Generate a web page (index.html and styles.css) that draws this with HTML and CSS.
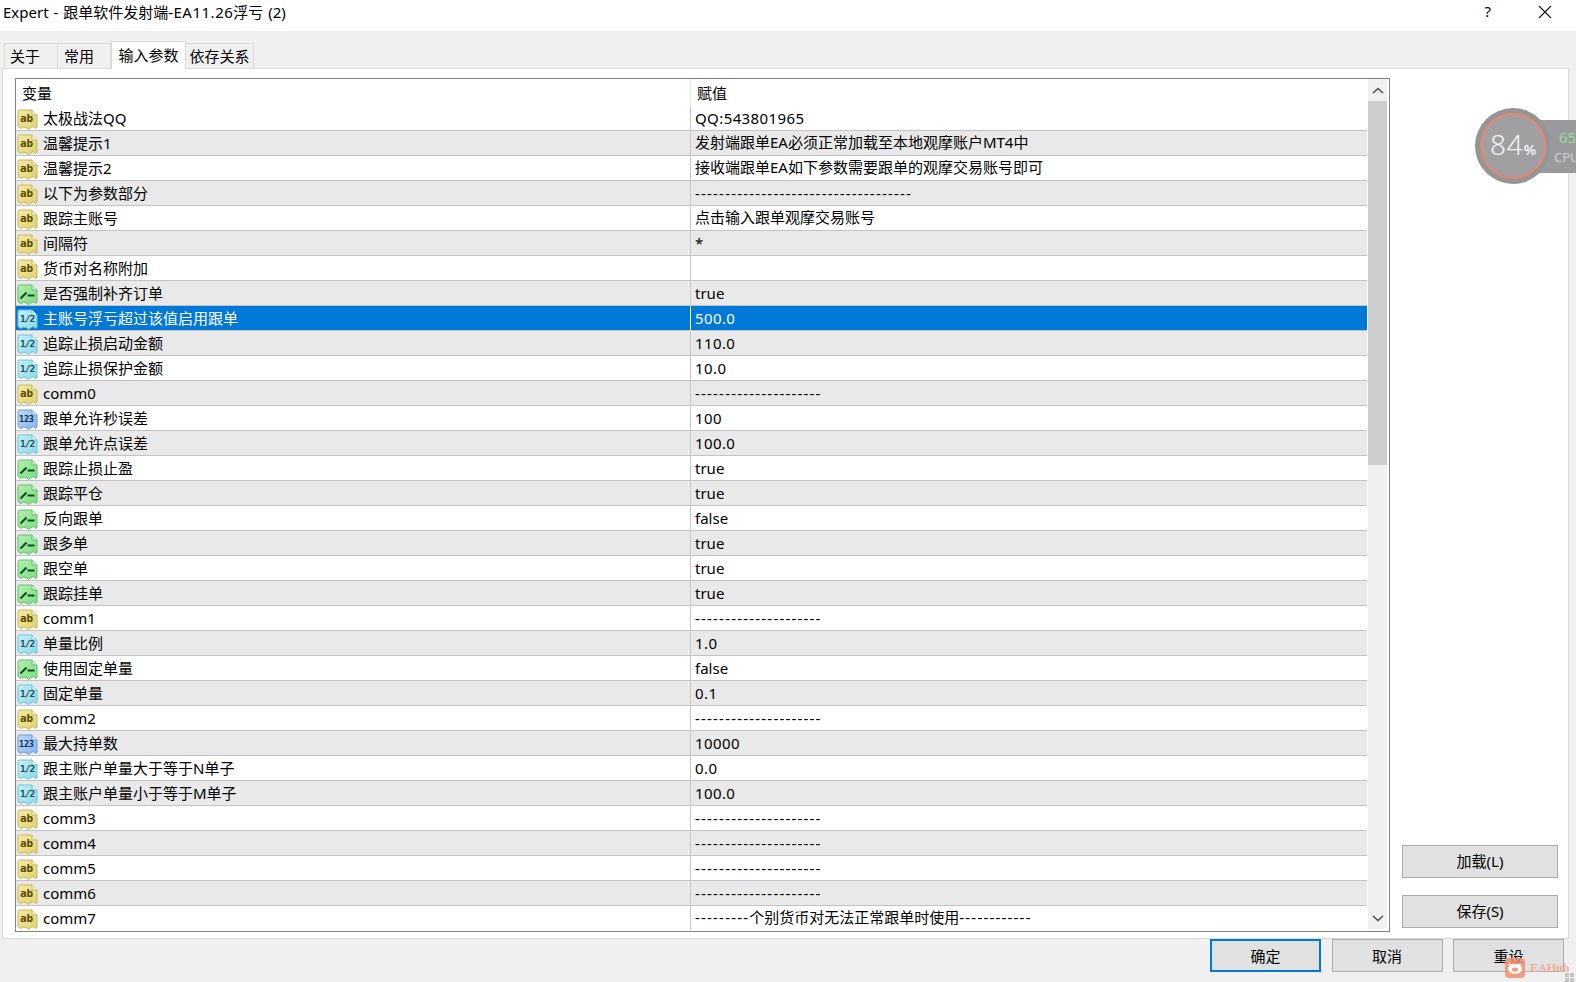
FILE: index.html
```html
<!DOCTYPE html>
<html>
<head>
  <meta charset="utf-8">
  <title>Expert</title>
  <link rel="stylesheet" href="styles.css">
</head>
<body>

<!-- icons of the parameter types -->
<svg class="sprite" xmlns="http://www.w3.org/2000/svg">
  <defs>
    <linearGradient id="gr-ab" x1="0" y1="0" x2="1" y2="1"><stop offset="0" stop-color="#f4eba8"/><stop offset="1" stop-color="#e0d06c"/></linearGradient>
    <linearGradient id="gr-bool" x1="0" y1="0" x2="1" y2="1"><stop offset="0" stop-color="#b4f0b0"/><stop offset="1" stop-color="#7cdc84"/></linearGradient>
    <linearGradient id="gr-dbl" x1="0" y1="0" x2="1" y2="1"><stop offset="0" stop-color="#c4f0f6"/><stop offset="1" stop-color="#8cd8e8"/></linearGradient>
    <linearGradient id="gr-int" x1="0" y1="0" x2="1" y2="1"><stop offset="0" stop-color="#c0dafa"/><stop offset="1" stop-color="#84b2ea"/></linearGradient>
  </defs>
  <symbol id="ic-ab" viewBox="0 0 21 21">
    <path d="M1 2.5Q1 1 2.5 1H15L20 6V18L18.5 19.5L16.5 17.5L14 18.5L11.5 20.5L9 18.5L6 18L4 19.5L1.5 18L1 17Z" fill="url(#gr-ab)" stroke="#c8b75c"/>
    <path d="M15 1V6H20" fill="#fbf6cf" stroke="#c8b75c"/>
  </symbol>
  <symbol id="ic-bool" viewBox="0 0 21 21">
    <path d="M1 2.5Q1 1 2.5 1H15L20 6V18L18.5 19.5L16.5 17.5L14 18.5L11.5 20.5L9 18.5L6 18L4 19.5L1.5 18L1 17Z" fill="url(#gr-bool)" stroke="#62c06c"/>
    <path d="M15 1V6H20" fill="#d8f8d8" stroke="#62c06c"/>
    <path d="M3.5 14.5L9.5 8.5M10.5 11.5H17.5" fill="none" stroke="#0d4d1c" stroke-width="2"/>
  </symbol>
  <symbol id="ic-dbl" viewBox="0 0 21 21">
    <path d="M1 2.5Q1 1 2.5 1H15L20 6V18L18.5 19.5L16.5 17.5L14 18.5L11.5 20.5L9 18.5L6 18L4 19.5L1.5 18L1 17Z" fill="url(#gr-dbl)" stroke="#6cc4d6"/>
    <path d="M15 1V6H20" fill="#e2fafd" stroke="#6cc4d6"/>
  </symbol>
  <symbol id="ic-int" viewBox="0 0 21 21">
    <path d="M1 2.5Q1 1 2.5 1H15L20 6V18L18.5 19.5L16.5 17.5L14 18.5L11.5 20.5L9 18.5L6 18L4 19.5L1.5 18L1 17Z" fill="url(#gr-int)" stroke="#6c9cd8"/>
    <path d="M15 1V6H20" fill="#e0eefc" stroke="#6c9cd8"/>
  </symbol>
</svg>

<div class="titlebar">
  <span class="title">Expert - 跟单软件发射端<span class="title-num">-EA11.26</span>浮亏 (2)</span>
  <span class="help">?</span>
  <svg class="close" width="14" height="14" viewBox="0 0 14 14"><path d="M1 1L13 13M13 1L1 13" stroke="#111" stroke-width="1.1" fill="none"/></svg>
</div>

<div class="tabs">
  <div class="tab tab-first">关于</div>
  <div class="tab tab-second">常用</div>
  <div class="tab active">输入参数</div>
  <div class="tab tab-last">依存关系</div>
</div>

<div class="panel">
  <div class="list">
    <div class="grid-wrap">
      <table class="grid">
        <thead>
          <tr><th class="col-name">变量</th><th class="col-value">赋值</th></tr>
        </thead>
        <tbody>
          <tr><td><span class="ic ic-ab"><svg><use href="#ic-ab"/></svg></span>太极战法QQ</td><td class="num">QQ:543801965</td></tr>
          <tr><td><span class="ic ic-ab"><svg><use href="#ic-ab"/></svg></span>温馨提示1</td><td class="cn">发射端跟单EA必须正常加载至本地观摩账户MT4中</td></tr>
          <tr><td><span class="ic ic-ab"><svg><use href="#ic-ab"/></svg></span>温馨提示2</td><td class="cn">接收端跟单EA如下参数需要跟单的观摩交易账号即可</td></tr>
          <tr><td><span class="ic ic-ab"><svg><use href="#ic-ab"/></svg></span>以下为参数部分</td><td class="dash">------------------------------------</td></tr>
          <tr><td><span class="ic ic-ab"><svg><use href="#ic-ab"/></svg></span>跟踪主账号</td><td class="cn">点击输入跟单观摩交易账号</td></tr>
          <tr><td><span class="ic ic-ab"><svg><use href="#ic-ab"/></svg></span>间隔符</td><td>*</td></tr>
          <tr><td><span class="ic ic-ab"><svg><use href="#ic-ab"/></svg></span>货币对名称附加</td><td></td></tr>
          <tr><td><span class="ic ic-bool"><svg><use href="#ic-bool"/></svg></span>是否强制补齐订单</td><td>true</td></tr>
          <tr class="selected"><td><span class="ic ic-dbl"><svg><use href="#ic-dbl"/></svg></span>主账号浮亏超过该值启用跟单</td><td class="num">500.0</td></tr>
          <tr><td><span class="ic ic-dbl"><svg><use href="#ic-dbl"/></svg></span>追踪止损启动金额</td><td class="num">110.0</td></tr>
          <tr><td><span class="ic ic-dbl"><svg><use href="#ic-dbl"/></svg></span>追踪止损保护金额</td><td class="num">10.0</td></tr>
          <tr><td><span class="ic ic-ab"><svg><use href="#ic-ab"/></svg></span>comm0</td><td class="dash">---------------------</td></tr>
          <tr><td><span class="ic ic-int"><svg><use href="#ic-int"/></svg></span>跟单允许秒误差</td><td class="num">100</td></tr>
          <tr><td><span class="ic ic-dbl"><svg><use href="#ic-dbl"/></svg></span>跟单允许点误差</td><td class="num">100.0</td></tr>
          <tr><td><span class="ic ic-bool"><svg><use href="#ic-bool"/></svg></span>跟踪止损止盈</td><td>true</td></tr>
          <tr><td><span class="ic ic-bool"><svg><use href="#ic-bool"/></svg></span>跟踪平仓</td><td>true</td></tr>
          <tr><td><span class="ic ic-bool"><svg><use href="#ic-bool"/></svg></span>反向跟单</td><td>false</td></tr>
          <tr><td><span class="ic ic-bool"><svg><use href="#ic-bool"/></svg></span>跟多单</td><td>true</td></tr>
          <tr><td><span class="ic ic-bool"><svg><use href="#ic-bool"/></svg></span>跟空单</td><td>true</td></tr>
          <tr><td><span class="ic ic-bool"><svg><use href="#ic-bool"/></svg></span>跟踪挂单</td><td>true</td></tr>
          <tr><td><span class="ic ic-ab"><svg><use href="#ic-ab"/></svg></span>comm1</td><td class="dash">---------------------</td></tr>
          <tr><td><span class="ic ic-dbl"><svg><use href="#ic-dbl"/></svg></span>单量比例</td><td class="num">1.0</td></tr>
          <tr><td><span class="ic ic-bool"><svg><use href="#ic-bool"/></svg></span>使用固定单量</td><td>false</td></tr>
          <tr><td><span class="ic ic-dbl"><svg><use href="#ic-dbl"/></svg></span>固定单量</td><td class="num">0.1</td></tr>
          <tr><td><span class="ic ic-ab"><svg><use href="#ic-ab"/></svg></span>comm2</td><td class="dash">---------------------</td></tr>
          <tr><td><span class="ic ic-int"><svg><use href="#ic-int"/></svg></span>最大持单数</td><td class="num">10000</td></tr>
          <tr><td><span class="ic ic-dbl"><svg><use href="#ic-dbl"/></svg></span>跟主账户单量大于等于N单子</td><td class="num">0.0</td></tr>
          <tr><td><span class="ic ic-dbl"><svg><use href="#ic-dbl"/></svg></span>跟主账户单量小于等于M单子</td><td class="num">100.0</td></tr>
          <tr><td><span class="ic ic-ab"><svg><use href="#ic-ab"/></svg></span>comm3</td><td class="dash">---------------------</td></tr>
          <tr><td><span class="ic ic-ab"><svg><use href="#ic-ab"/></svg></span>comm4</td><td class="dash">---------------------</td></tr>
          <tr><td><span class="ic ic-ab"><svg><use href="#ic-ab"/></svg></span>comm5</td><td class="dash">---------------------</td></tr>
          <tr><td><span class="ic ic-ab"><svg><use href="#ic-ab"/></svg></span>comm6</td><td class="dash">---------------------</td></tr>
          <tr><td><span class="ic ic-ab"><svg><use href="#ic-ab"/></svg></span>comm7</td><td class="cn"><span class="dash">---------</span>个别货币对无法正常跟单时使用<span class="dash">------------</span></td></tr>
        </tbody>
      </table>
    </div>
    <div class="scrollbar">
      <div class="arrow"><svg width="12" height="7" viewBox="0 0 12 7"><path d="M1 6L6 1.5L11 6" fill="none" stroke="#505050" stroke-width="1.6"/></svg></div>
      <div class="thumb"></div>
      <div class="track"></div>
      <div class="arrow"><svg width="12" height="7" viewBox="0 0 12 7"><path d="M1 1L6 5.5L11 1" fill="none" stroke="#505050" stroke-width="1.6"/></svg></div>
    </div>
  </div>

  <div class="side">
    <button class="btn side-btn">加载(L)</button>
    <button class="btn side-btn">保存(S)</button>
  </div>
</div>

<div class="footer">
  <button class="btn foot-btn default">确定</button>
  <button class="btn foot-btn">取消</button>
  <button class="btn foot-btn">重设</button>
</div>

<!-- CPU meter lying over the window -->
<div class="meter">
  <div class="meter-bar">
    <span class="meter-num">65</span>
    <span class="meter-cpu">CPU</span>
  </div>
  <div class="meter-disc">
    <div class="meter-ring"><span class="meter-val">84</span><span class="meter-pct">%</span></div>
  </div>
</div>

<!-- watermark -->
<div class="mark">
  <svg width="20" height="20" viewBox="0 0 20 20">
    <rect width="20" height="20" rx="4" fill="#f2906f"/>
    <ellipse cx="10" cy="11" rx="7" ry="5" fill="#fff"/>
    <path d="M4 6L7 8M16 6L13 8" stroke="#fff" stroke-width="2"/>
    <ellipse cx="10" cy="11.5" rx="3" ry="2" fill="#f2906f"/>
  </svg>
  <span class="mark-text">EAHub</span>
</div>
<svg class="grip" width="9" height="9" viewBox="0 0 9 9">
  <path d="M0 0h4v4H0zM5 0h4v4H5zM0 5h4v4H0zM5 5h4v4H5z" fill="#c4c4c4"/>
</svg>

</body>
</html>
```

FILE: styles.css
```css
html, body {
  margin: 0;
  padding: 0;
}
body {
  position: relative;
  width: 1576px;
  height: 982px;
  overflow: hidden;
  background: #f0f0f0;
  color: #000;
  font-family: "Noto Sans", "Noto Sans CJK SC", sans-serif;
  font-size: 15px;
}
.sprite {
  position: absolute;
  width: 0;
  height: 0;
}

/* title bar */
.titlebar {
  display: flex;
  align-items: center;
  height: 31px;
  background: #fff;
  padding: 0 0 9px 3px;
  box-sizing: border-box;
}
.title {
  font-size: 15px;
  word-spacing: 1px;
  flex: 1;
}
.title-num {
  letter-spacing: .5px;
}
.help {
  margin-right: 47px;
  font-size: 15px;
}
.close {
  margin: 2px 24px 0 0;
}

/* tabs */
.tabs {
  display: flex;
  align-items: flex-end;
  height: 37px;
  padding-left: 4px;
}
.tab {
  position: relative;
  height: 25px;
  line-height: 24px;
  box-sizing: border-box;
  border: 1px solid #d9d9d9;
  border-bottom: none;
  border-left: none;
  text-align: center;
}
.tab-first {
  width: 54px;
  padding-left: 5px;
  text-align: left;
  border-left: 1px solid #d9d9d9;
}
.tab-second {
  width: 53px;
  padding-left: 6px;
  text-align: left;
}
.tab.active {
  width: 75px;
  height: 28px;
  line-height: 26px;
  background: #fff;
  border-left: 1px solid #d9d9d9;
  margin-bottom: -1px;
  z-index: 1;
}
.tab-last {
  width: 68px;
}

/* main panel */
.panel {
  display: flex;
  height: 871px;
  box-sizing: border-box;
  margin: 0 7px 0 2px;
  background: #fff;
  border: 1px solid #d9d9d9;
  padding: 9px 0 0 12px;
}
.list {
  display: flex;
  width: 1375px;
  height: 854px;
  box-sizing: border-box;
  border: 1px solid #828282;
}
.grid-wrap {
  width: 1352px;
}
.grid {
  width: 1351px;
  table-layout: fixed;
  border-collapse: separate;
  border-spacing: 0;
}
.grid th {
  height: 27px;
  padding: 0;
  font-weight: normal;
  text-align: left;
}
.col-name {
  width: 674px;
  padding-left: 6px !important;
  box-sizing: border-box;
}
.col-value {
  padding-left: 6px !important;
  border-left: 1px solid #e4e4e4;
}
.grid td {
  height: 24px;
  padding: 0;
  border-bottom: 1px solid #c3c3c3;
  white-space: nowrap;
  line-height: 22px;
  vertical-align: middle;
}
.grid td + td {
  border-left: 1px solid #c8c8c8;
  padding-left: 4px;
}
.grid td.cn {
  padding-bottom: 2px;
  height: 22px;
}
.grid tbody tr:nth-child(even) td {
  background: #e9e9e9;
}
.grid tbody tr:last-child td {
  border-bottom: none;
}
.grid tbody tr.selected td {
  background: #0078d7;
  color: #fff;
}
.grid tbody tr.selected td + td {
  border-left-color: #fff;
}
.dash {
  letter-spacing: 1.2px;
}
.num {
  letter-spacing: .4px;
}

/* type icon with its label on top */
.ic {
  position: relative;
  display: inline-block;
  width: 21px;
  height: 21px;
  margin: 0 5px 0 1px;
  vertical-align: -6px;
}
.ic svg {
  display: block;
  width: 21px;
  height: 21px;
}
.ic::after {
  position: absolute;
  left: 3px;
  top: 0;
  font-family: "DejaVu Sans Mono", monospace;
  font-weight: bold;
  line-height: 20px;
}
.ic-ab::after {
  content: "ab";
  font-size: 11px;
  color: #544900;
}
.ic-dbl::after {
  content: "1/2";
  font-size: 9.5px;
  letter-spacing: -1px;
  color: #1f4f5c;
}
.ic-int::after {
  content: "123";
  left: 2px;
  font-size: 8.5px;
  letter-spacing: -.2px;
  color: #0c2c58;
}

/* scrollbar */
.scrollbar {
  display: flex;
  flex-direction: column;
  width: 19px;
  margin: 0 2px 2px 1px;
  background: #f0f0f0;
}
.arrow {
  display: flex;
  align-items: center;
  justify-content: center;
  height: 22px;
  flex: none;
}
.thumb {
  height: 364px;
  flex: none;
  background: #cdcdcd;
}
.track {
  flex: 1;
}

/* buttons */
.btn {
  box-sizing: border-box;
  height: 33px;
  background: #e1e1e1;
  border: 1px solid #adadad;
  border-radius: 0;
  padding: 0;
  font-family: inherit;
  font-size: 15px;
  color: #000;
}
.side {
  display: flex;
  flex-direction: column;
  justify-content: flex-end;
  gap: 17px;
  margin-left: 12px;
  padding-bottom: 10px;
}
.side-btn {
  width: 156px;
  padding-bottom: 2px;
}
.footer {
  display: flex;
  justify-content: flex-end;
  gap: 10.5px;
  padding-right: 12px;
}
.foot-btn {
  width: 111px;
}
.default {
  border: 2px solid #0078d7;
}

/* CPU meter */
.meter {
  position: absolute;
  left: 1475px;
  top: 108px;
  width: 101px;
  height: 76px;
}
.meter-bar {
  position: absolute;
  left: 56px;
  top: 12px;
  width: 45px;
  height: 53px;
  background: #9a9a9c;
}
.meter-num {
  position: absolute;
  left: 28px;
  top: 7px;
  color: #96dc96;
  font-size: 15px;
}
.meter-cpu {
  position: absolute;
  left: 23px;
  top: 28px;
  color: #cfcfcf;
  font-size: 13px;
}
.meter-disc {
  position: absolute;
  left: 0;
  top: 0;
  width: 76px;
  height: 76px;
  box-sizing: border-box;
  padding: 5px;
  border-radius: 50%;
  background: #959597;
}
.meter-ring {
  display: flex;
  align-items: baseline;
  justify-content: center;
  height: 66px;
  box-sizing: border-box;
  padding-top: 11px;
  border: 2.5px solid #ea8571;
  border-radius: 50%;
  background: #a0a0a2;
  color: #f4f4f4;
}
.meter-val {
  font-size: 28px;
  font-weight: 300;
  letter-spacing: 1px;
  line-height: 36px;
}
.meter-pct {
  font-size: 14px;
  font-weight: 600;
}

/* watermark */
.mark {
  position: absolute;
  left: 1505px;
  top: 958px;
  display: flex;
  align-items: center;
  gap: 5px;
  opacity: .85;
}
.mark-text {
  font-family: "Liberation Serif", serif;
  font-weight: bold;
  font-size: 12px;
  color: #f2a48c;
}
.grip {
  position: absolute;
  left: 1565px;
  top: 973px;
}
```
